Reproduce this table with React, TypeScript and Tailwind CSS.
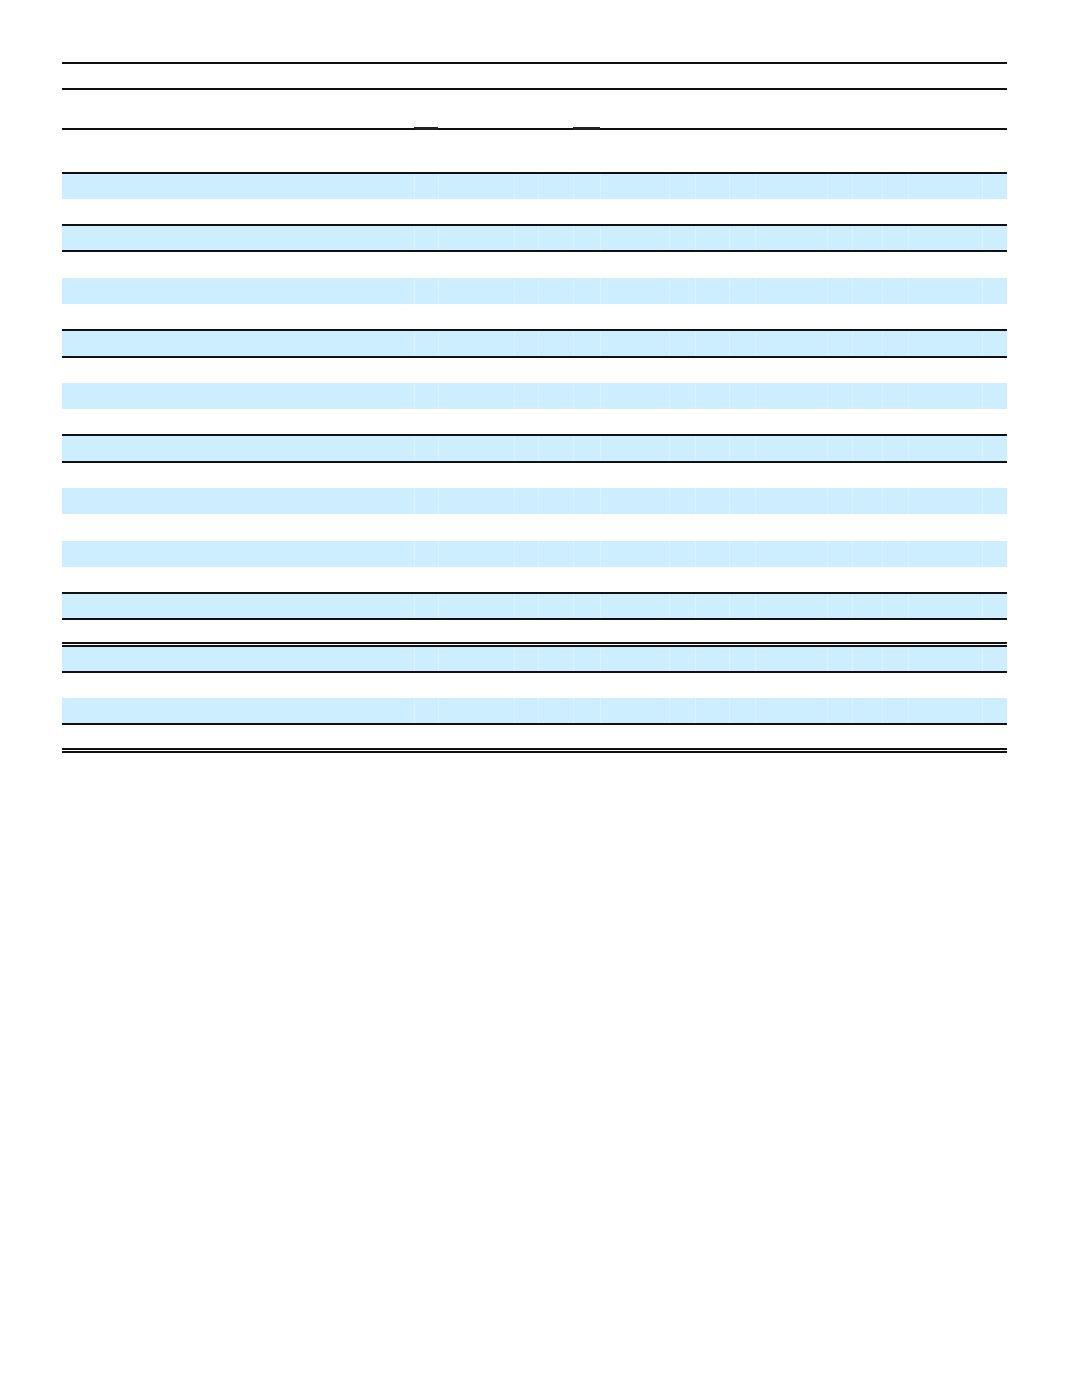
const COLS = 16;

type Row = {
  h: string;
  blue?: boolean;
  border?: string;
};

// heights worked out from the scan of the printed table; rows carry no text
const rows: Row[] = [
  { h: "h-[26px]", border: "border-t-2" },
  { h: "h-[40px]", border: "border-t-2" },
  { h: "h-[44px]", border: "border-t-2" },
  { h: "h-[27px]", border: "border-t-2", blue: true },
  { h: "h-[25px]" },
  { h: "h-[28px]", border: "border-t-2 border-b-2", blue: true },
  { h: "h-[26px]" },
  { h: "h-[26px]", blue: true },
  { h: "h-[25px]" },
  { h: "h-[29px]", border: "border-t-2 border-b-2", blue: true },
  { h: "h-[25px]" },
  { h: "h-[26px]", blue: true },
  { h: "h-[25px]" },
  { h: "h-[29px]", border: "border-t-2 border-b-2", blue: true },
  { h: "h-[25px]" },
  { h: "h-[26px]", blue: true },
  { h: "h-[27px]" },
  { h: "h-[26px]", blue: true },
  { h: "h-[25px]" },
  { h: "h-[28px]", border: "border-t-2 border-b-2", blue: true },
  { h: "h-[22px]" },
  { h: "h-[31px]", border: "border-t-[5px] border-double border-b-2", blue: true },
  { h: "h-[25px]" },
  { h: "h-[27px]", border: "border-b-2", blue: true },
  { h: "h-[23px]" },
  { h: "h-[6px]", border: "border-t-[5px] border-double" },
];

const gridCols =
  "grid grid-cols-[352px_24px_76px_24px_35px_27px_69px_26px_34px_26px_72px_25px_30px_26px_74px_25px]";

function TableRow({ row, index }: { row: Row; index: number }) {
  return (
    <div
      className={`${gridCols} ${row.h} ${row.border ?? ""} border-[#111] bg-clip-padding ${
        row.blue ? "bg-[#cceeff]" : "bg-white"
      }`}
    >
      {Array.from({ length: COLS }).map((_, col) => (
        <div
          key={col}
          className={`relative h-full ${
            col > 0 && row.blue ? "border-l border-[#dcf3ff]" : ""
          }`}
        >
          {/* underline marks below the two header groups */}
          {index === 2 && (col === 1 || col === 5) ? (
            <span className="absolute -top-[3px] left-0 right-0 h-[3px] bg-[#222]" />
          ) : null}
        </div>
      ))}
    </div>
  );
}

export default function App() {
  return (
    <main className="min-h-[1386px] w-[1071px] bg-white pt-[62px] pl-[62px]">
      <div className="w-[945px]">
        {rows.map((row, i) => (
          <TableRow key={i} row={row} index={i} />
        ))}
      </div>
    </main>
  );
}
